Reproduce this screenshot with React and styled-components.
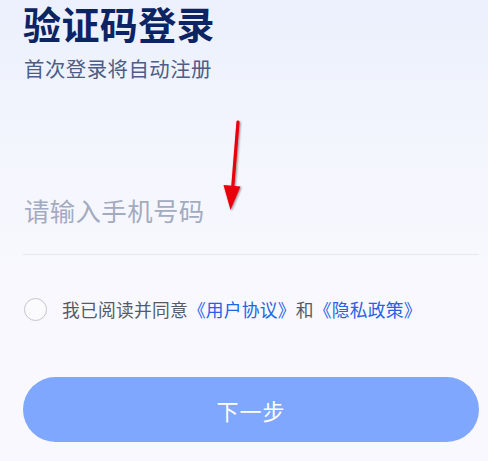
import React from 'react'
import styled, { createGlobalStyle } from 'styled-components'

const GlobalStyle = createGlobalStyle`
  html, body {
    margin: 0;
    padding: 0;
  }
  body {
    font-family: "Noto Sans CJK SC", "Noto Sans", sans-serif;
    background: #f8f8fe;
  }
`

const Page = styled.div`
  position: relative;
  width: 488px;
  height: 461px;
  overflow: hidden;
  box-sizing: border-box;
  padding: 0 9px 0 23px;
  background: linear-gradient(180deg, #ebf0fc 0%, #f4f6fd 35%, #f8f8fe 60%, #f8f8fe 100%);
  display: flex;
  flex-direction: column;
`

const Title = styled.h1`
  margin: 0;
  padding-top: 4px;
  font-size: 38px;
  line-height: 38px;
  font-weight: 700;
  color: #0c2463;
  letter-spacing: 0.4px;
`

const Subtitle = styled.p`
  margin: 12px 0 0 1px;
  font-size: 20.4px;
  line-height: 28px;
  color: #4d5d88;
  letter-spacing: 0.5px;
`

const PhoneField = styled.div`
  margin-top: 103px;
  height: 70px;
  box-sizing: border-box;
  padding-bottom: 20px;
  display: flex;
  align-items: center;
  border-bottom: 1px solid #e6e8ef;
`

const Placeholder = styled.span`
  padding-left: 1px;
  font-size: 25.4px;
  color: #a3abc0;
  letter-spacing: 0.4px;
`

const AgreeRow = styled.div`
  margin-top: 42px;
  display: flex;
  align-items: center;
  height: 24px;
`

const Radio = styled.span`
  width: 21px;
  height: 21px;
  border-radius: 50%;
  border: 1px solid #c4c6cc;
  background: #fbfbfe;
  margin-left: 1px;
  flex-shrink: 0;
`

const AgreeText = styled.span`
  margin-left: 15px;
  font-size: 17.8px;
  color: #555b66;
  letter-spacing: 0.2px;
`

const Link = styled.span`
  color: #2563e6;
`

const NextButton = styled.button`
  margin-top: 56px;
  width: 456px;
  height: 65px;
  border: none;
  border-radius: 33px;
  background: #7fa7fd;
  color: #ffffff;
  font-family: inherit;
  font-size: 22px;
  letter-spacing: 1px;
  display: flex;
  align-items: center;
  justify-content: center;
  padding: 0;
`

const Arrow = styled.svg`
  position: absolute;
  left: 218px;
  top: 116px;
  width: 32px;
  height: 100px;
  overflow: visible;
`

export default function App() {
  return (
    <>
      <GlobalStyle />
      <Page>
        <Title>验证码登录</Title>
        <Subtitle>首次登录将自动注册</Subtitle>
        <PhoneField>
          <Placeholder>请输入手机号码</Placeholder>
        </PhoneField>
        <AgreeRow>
          <Radio />
          <AgreeText>
            我已阅读并同意<Link>《用户协议》</Link>和<Link>《隐私政策》</Link>
          </AgreeText>
        </AgreeRow>
        <NextButton>下一步</NextButton>
        <Arrow viewBox="0 0 32 100">
          <defs>
            <filter id="sh" x="-50%" y="-20%" width="200%" height="140%">
              <feGaussianBlur in="SourceAlpha" stdDeviation="1.2" />
              <feOffset dx="1" dy="1" result="b" />
              <feComponentTransfer>
                <feFuncA type="linear" slope="0.45" />
              </feComponentTransfer>
              <feMerge>
                <feMergeNode />
                <feMergeNode in="SourceGraphic" />
              </feMerge>
            </filter>
          </defs>
          <g filter="url(#sh)">
            <line x1="20" y1="6" x2="14.5" y2="74" stroke="#e8000b" strokeWidth="3.2" strokeLinecap="round" />
            <polygon points="5.5,69 22.5,70.5 12.5,94" fill="#e8000b" />
          </g>
        </Arrow>
      </Page>
    </>
  )
}
